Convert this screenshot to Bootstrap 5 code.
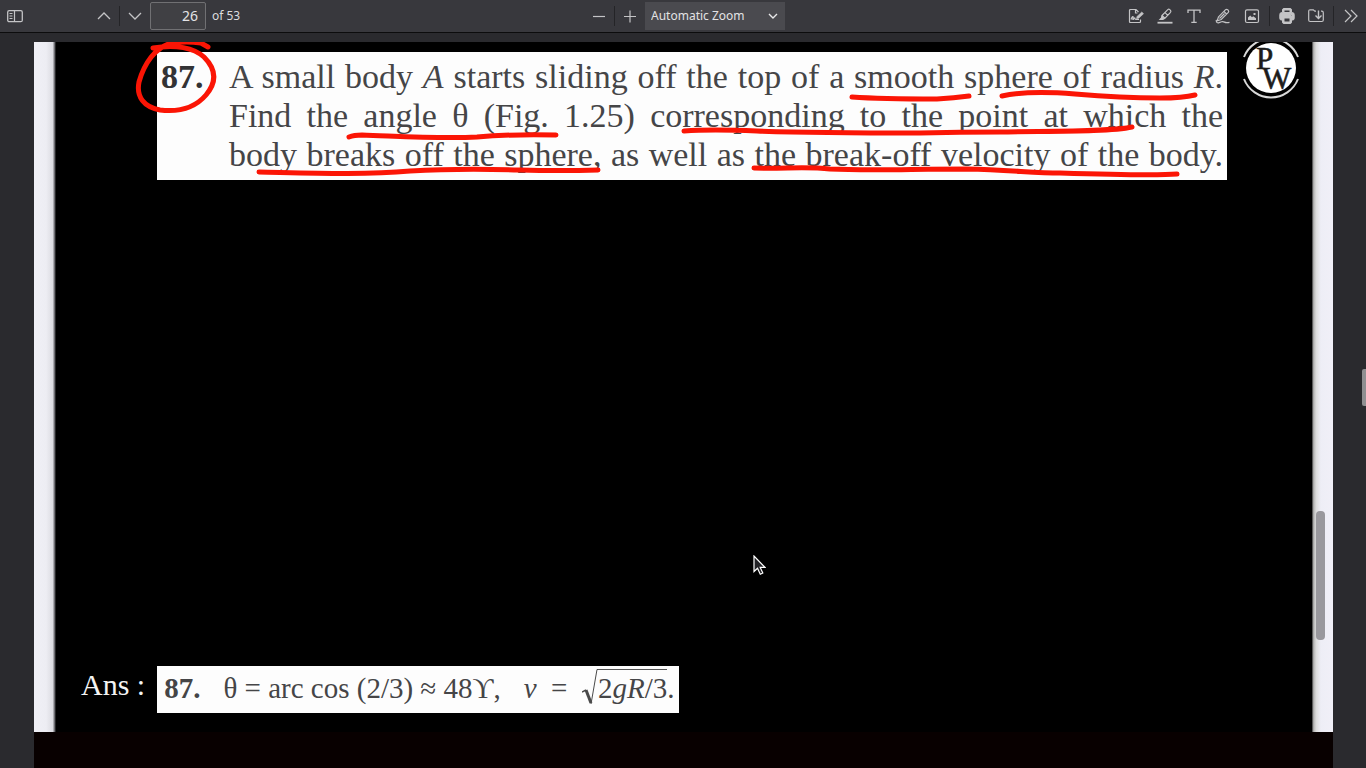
<!DOCTYPE html>
<html lang="en">
<head>
<meta charset="utf-8">
<meta name="viewport" content="width=device-width, initial-scale=1">
<title>PDF viewer</title>
<link href="https://cdn.jsdelivr.net/npm/bootstrap@5.3.0/dist/css/bootstrap.min.css" rel="stylesheet">
<style>
  body { background: #2a2a2e; font-family: "Noto Sans", sans-serif; font-size: 12px; color: #dcdcde; }
  .toolbar { background: #38383d; height: 33px; border-bottom: 1px solid #0c0c0d; padding: 0 1px; }
  .tool-group { gap: 1px; }
  .side-group { flex: 1 1 0; }
  .tool { width: 28px; height: 28px; padding: 0; border: 0; border-radius: 2px; background: none; color: #c4c4c6; display: flex; align-items: center; justify-content: center; }
  .tool:hover { background: #4a4a4f; }
  .tool svg { width: 16px; height: 16px; fill: none; stroke: currentColor; }
  .page-nav { margin-left: 60px; }
  .page-total { margin-left: 5px; }
  .divider { width: 1px; height: 20px; background: #242427; }
  .divider-wide { margin: 0 2px; }
  .page-input { width: 56px; height: 28px; background: #404044; border: 1px solid #707073; border-radius: 2px; color: #e4e4e6; font-size: 14px; text-align: right; padding: 0 7px 2px; }
  .zoom-select { width: 140px; height: 28px; appearance: none; background: #4a4a4f; border: 0; color: #e2e2e4; padding: 0 6px; }
  .zoom-arrow { right: 7px; top: 9px; width: 10px; height: 10px; pointer-events: none; }
  .viewer { padding: 9px 33px 0 34px; min-height: 0; }
  .sheet { background: #000; min-height: 0; font-family: "Liberation Serif", serif; }
  .edge-left { width: 22px; background: linear-gradient(90deg, #f0f0f6 0, #ededf3 55%, #dcdce2 85%, #55555a 95%, #000 100%); }
  .edge-right { width: 21px; background: linear-gradient(90deg, #333 0, #b5b5b4 8%, #dcdcdc 20%, #eeeef6 42%, #f1f0f8 100%); }
  .edge-thumb { top: 68%; right: 8px; width: 9px; height: 129px; border-radius: 4px; background: #99989d; }
  .question { margin-left: 101px; margin-top: 10px; padding: 5px 4px 6px; background: #fdfdfd; color: #454547; font-size: 34px; line-height: 39px; }
  .question-number { width: 68px; font-size: 34px; color: #333335; }
  .question-line { text-align: justify; text-align-last: justify; white-space: nowrap; }
  .brand { width: 85px; }
  .brand svg { display: block; width: 86px; height: 64px; }
  .ink { top: 0; left: 0; width: 100%; pointer-events: none; fill: none; stroke: #fb1505; stroke-width: 5; stroke-linecap: round; stroke-linejoin: round; }
  .answer-row { padding: 0 0 19px 25px; gap: 12px; line-height: 38px; }
  .answer-label { font-size: 30px; color: #f3f3f3; }
  .answer { height: 47px; padding: 3px 4px 3px 7px; background: #fdfdfd; color: #454547; font-size: 29px; gap: 23px; }
  .root-sign { width: 16px; height: 38px; }
  .radicand { border-top: 1px solid #555; line-height: 36px; }
  .next-sheet { height: 36px; background: #080000; }
  .view-thumb { top: 48%; right: 0; width: 4px; height: 37px; border-radius: 2px 0 0 2px; background: #8f8f91; }
  .pointer { left: 55%; top: 555px; width: 13px; height: 21px; margin-left: 2px; }
</style>
</head>
<body class="vh-100 overflow-hidden d-flex flex-column position-relative">
<header class="toolbar d-flex align-items-center flex-shrink-0">
  <div class="side-group tool-group d-flex align-items-center">
    <button class="tool" aria-label="Toggle sidebar"><svg viewBox="0 0 16 16"><rect x=".7" y="2.7" width="14.6" height="11" rx="1.5" stroke-width="1.3"/><path d="M7.5 3v10.500M2.500 5.500h3M2.500 8h3M2.500 10.500h3" stroke-width="1.2"/></svg></button>
    <button class="tool page-nav" aria-label="Previous page"><svg viewBox="0 0 16 16"><path d="M2 11 8 5l6 6" stroke-width="1.300"/></svg></button>
    <span class="divider"></span>
    <button class="tool" aria-label="Next page"><svg viewBox="0 0 16 16"><path d="M2 5l6 6 6-6" stroke-width="1.300"/></svg></button>
    <input class="page-input" type="text" value="26" aria-label="Page">
    <span class="page-total">of 53</span>
  </div>
  <div class="tool-group d-flex align-items-center ps-1">
    <button class="tool" aria-label="Zoom out"><svg viewBox="0 0 16 16"><path d="M2 8.500h12" stroke-width="1.200"/></svg></button>
    <span class="divider"></span>
    <button class="tool" aria-label="Zoom in"><svg viewBox="0 0 16 16"><path d="M2 8.500h12M8 2.500v12" stroke-width="1.200"/></svg></button>
    <div class="position-relative">
      <select class="zoom-select d-block" aria-label="Zoom"><option>Automatic Zoom</option><option>Actual Size</option><option>Page Fit</option></select>
      <svg class="zoom-arrow position-absolute" viewBox="0 0 10 10" fill="none" stroke="#e8e8ea" stroke-width="1.400"><path d="M1 3l4 4 4-4"/></svg>
    </div>
  </div>
  <div class="side-group tool-group d-flex align-items-center justify-content-end">
    <button class="tool" aria-label="Add signature"><svg viewBox="0 0 16 16" stroke-width="1.200"><path d="M12.500 11.500v2q0 1-1 1h-9q-1 0-1-1v-11q0-1 1-1H8L10.500 4M7.500 1.500V5h2"/><path d="m8.500 10.800.5-2.300 4.800-4.500 1.700 1.700-4.800 4.600Z" fill="currentColor" stroke-width=".6"/><path d="M3 11.500c1-3 2-3.500 2.200-2.500s-1 2.500 0 2.500 1-2 1.600-1.500 0 1.500 1.200 1.500h3"/></svg></button>
    <button class="tool" aria-label="Highlight"><svg viewBox="0 0 16 16" stroke-width="1.200"><path d="M5 7.500 10.800 1.600q1-.8 1.900 0l.8.8q.8 1 0 1.900L8 10.200ZM8 4.600l2.800 2.800M5 7.500l-.5 2.300L3 11.500h2.800L8 10.200"/><path d="m5 7.500 2.800 2.700-2 1.300H2.800l1.700-1.700Z" fill="currentColor" stroke="none"/><path d="M.5 14.700h15" stroke-width="1.800"/></svg></button>
    <button class="tool" aria-label="Add text"><svg viewBox="0 0 16 16" stroke-width="1.300"><path d="M2 5V2.200h12V5M8 2.200v12M5.300 14.300h5.400"/></svg></button>
    <button class="tool" aria-label="Draw"><svg viewBox="0 0 16 16" stroke-width="1.200"><path d="M3.500 8.800 10.600 1.700q1-.8 2 0l.7.700q.8 1 0 2L6.200 11.500l-4 1.300ZM9 3.500l2.700 2.700M4.500 10.500l5-5"/><path d="M1.200 11.800 1.500 14q.6 1 2 .8l3-1q1.500-.5 3 .3t5 .2"/></svg></button>
    <button class="tool" aria-label="Add image"><svg viewBox="0 0 16 16" stroke-width="1.200"><rect x="1.500" y="1.800" width="13" height="12.700" rx="1.500"/><path d="M4 12V9.500l2.200-2L8 9.200l1.200-1 2.800 2V12Z" fill="currentColor" stroke="none"/><rect x="9.500" y="5" width="2" height="2" fill="currentColor" stroke="none"/></svg></button>
    <span class="divider divider-wide"></span>
    <button class="tool" aria-label="Print"><svg viewBox="0 0 16 16" stroke="none"><path fill="currentColor" fill-rule="evenodd" d="M3.500 4.500V2q0-1.500 1.500-1.500h6q1.500 0 1.500 1.500v2.500h.7q2 0 2 2v4q0 1.500-1.500 1.500h-1.200v2q0 1.500-1.500 1.500H5q-1.500 0-1.500-1.500v-2H2.300Q.8 12 .8 10.500v-4q0-2 2-2Zm1.500 0h6V2H5ZM5 10v4h6v-4Zm6.500-3.500V8H13V6.500Z"/></svg></button>
    <button class="tool" aria-label="Save"><svg viewBox="0 0 16 16" stroke-width="1.200"><path d="M8 3.200H6.800L5.300 1.800H2q-1.300 0-1.300 1.300V12q0 1.500 1.500 1.500h11.600q1.500 0 1.500-1.500V4.700q0-1.500-1.500-1.500h-.8"/><path d="M10.500 2.500v7.800M7.500 7.600l3 3 3-3" stroke-width="1.400"/></svg></button>
    <span class="divider divider-wide"></span>
    <button class="tool" aria-label="Tools"><svg viewBox="0 0 16 16" stroke-width="1.200"><path d="m2 2 6 6-6 6M8 2l6 6-6 6"/></svg></button>
  </div>
</header>

<main class="viewer flex-fill d-flex flex-column">
  <section class="sheet flex-fill d-flex position-relative overflow-hidden">
    <div class="edge-left flex-shrink-0"></div>
    <div class="flex-fill d-flex flex-column">
      <div class="d-flex">
        <div class="question flex-fill d-flex">
          <strong class="question-number flex-shrink-0">87.</strong>
          <div class="flex-fill">
            <div class="question-line">A small body <i>A</i> starts sliding off the top of a smooth sphere of radius <i>R</i>.</div>
            <div class="question-line">Find the angle θ (Fig. 1.25) corresponding to the point at which the</div>
            <div class="question-line">body breaks off the sphere, as well as the break-off velocity of the body.</div>
          </div>
        </div>
        <div class="brand flex-shrink-0">
          <svg viewBox="1227 42 86 64" aria-label="PW">
            <circle cx="1271" cy="68" r="25" fill="#fff"/>
            <path d="M1244 57a29 29 0 0 1 54 0M1244 79a29 29 0 0 0 54 0" fill="none" stroke="#d8d8d8" stroke-width="2"/>
            <text font-size="31" fill="#1c1c1c" stroke="#1c1c1c" stroke-width=".6"><tspan x="1256" y="69">P</tspan><tspan x="1262" y="89">W</tspan></text>
          </svg>
        </div>
      </div>
      <div class="answer-row d-flex mt-auto">
        <span class="answer-label">Ans :</span>
        <div class="answer d-flex">
          <strong>87.</strong>
          <span>θ = arc cos (2/3) ≈ 48ϒ,</span>
          <span class="d-flex"><span><i>v</i>&nbsp; =&nbsp;&nbsp;</span><svg class="root-sign" viewBox="0 0 16 38" fill="none" stroke="#4a4a4a"><path d="M0 23l4-2" stroke-width="1.500"/><path d="m4 21 5 13" stroke-width="3"/><path d="M9 35 15 .5h1"/></svg><span class="radicand">2<i>gR</i>/3</span>.</span>
        </div>
      </div>
    </div>
    <div class="edge-right flex-shrink-0"></div>
    <div class="edge-thumb position-absolute"></div>
    <svg class="ink position-absolute" viewBox="34 42 1299 140" aria-hidden="true">
      <path d="M153 48C176 44 194 48 204 57C216 69 217 82 206 95C194 109 177 112 160 110C144 107 136 97 139 82C144 64 155 47 172 43Q186 41 201 43L208 47"/>
      <path d="M349 137Q354 135 362 135C395 136 440 139 477 137Q510 134 556 135"/>
      <path d="M259 172C310 173 365 175 410 171C460 168 490 169 520 170Q560 171 598 170"/>
      <path d="M852 97C880 99 915 99 937 99Q954 98 969 96"/>
      <path d="M1002 96C1020 92 1050 92 1075 94C1110 97 1135 98 1160 98Q1183 98 1195 95"/>
      <path d="M684 131C710 129 735 130 757 131C810 133 865 133 920 133Q960 132 1000 132C1050 131 1110 132 1132 127"/>
      <path d="M754 168C785 169 805 166 830 169C870 171 910 169 967 169C1010 170 1035 173 1060 173Q1155 176 1177 174"/>
    </svg>
  </section>
  <section class="next-sheet flex-shrink-0"></section>
</main>
<div class="view-thumb position-absolute"></div>
<svg class="pointer position-absolute" viewBox="0 0 13 21" aria-hidden="true"><path d="M1 1v15.500l3.500-3.300 2.800 6 2.500-1.200-2.600-5.600H12Z" fill="#222226" stroke="#fff" stroke-width="1.200"/></svg>
</body>
</html>
